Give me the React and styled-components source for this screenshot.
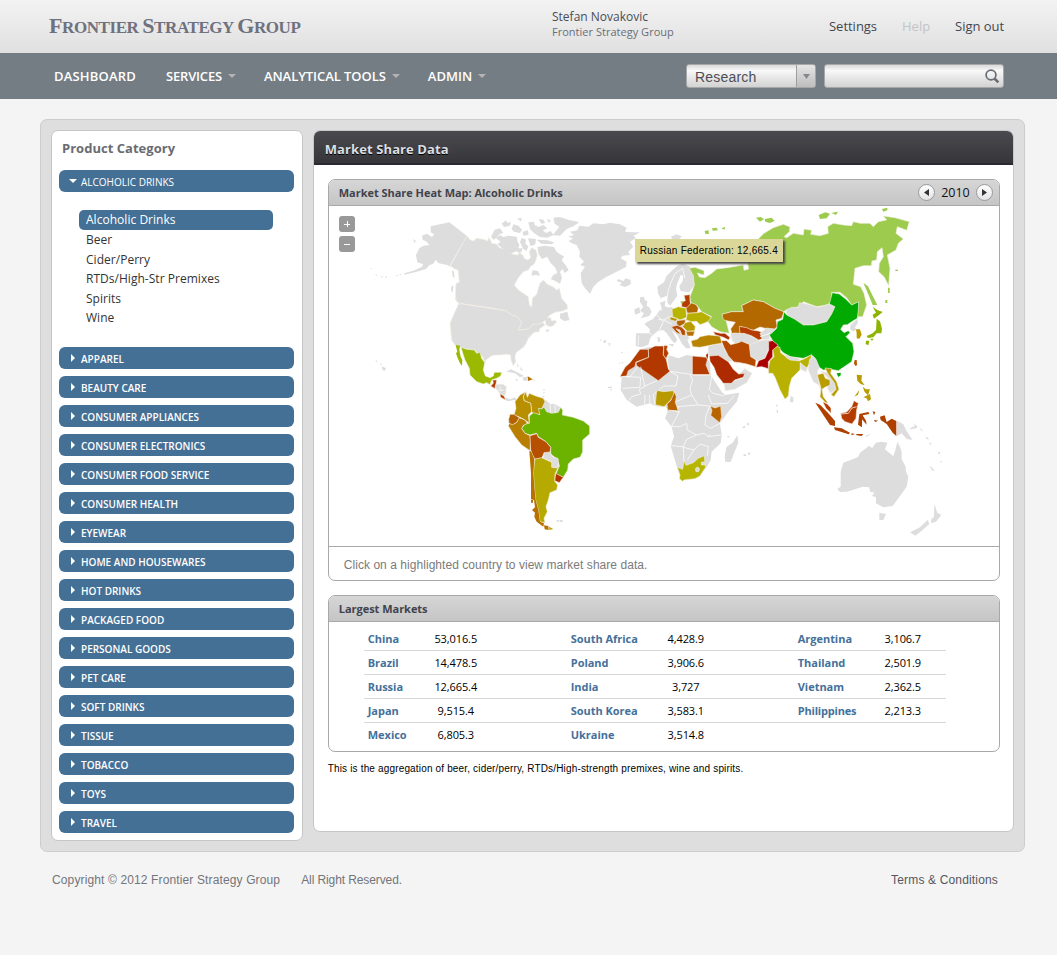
import React from "react";
import styled, { createGlobalStyle } from "styled-components";

const sans = '"Open Sans", "Noto Sans", sans-serif';
const helv = '"Liberation Sans", Arial, sans-serif';

const GlobalStyle = createGlobalStyle`
  * { box-sizing: border-box; }
  body { margin: 0; background: #f4f4f4; font-family: ${sans}; font-size: 12px; color: #333; }
  a { color: inherit; text-decoration: none; }
  ul { list-style: none; margin: 0; padding: 0; }
  h1, h2, h3, p { margin: 0; }
  svg { flex-shrink: 0; }
`;

const Page = styled.div`
  width: 1057px;
  height: 955px;
  overflow: hidden;
`;

const Header = styled.header`
  display: flex;
  height: 53px;
  padding-left: 49px;
  background: linear-gradient(#f3f3f3, #e0e0e0);
`;

const Logo = styled.h1`
  width: 503px;
  padding-top: 16px;
  font: bold 17px/24px "Liberation Serif", serif;
  text-transform: uppercase;
  letter-spacing: -0.42px;
  color: #6f717e;
  white-space: nowrap;
`;

const LogoCap = styled.span`
  font-size: 22px;
  line-height: 20px;
`;

const UserInfo = styled.div`
  width: 277px;
  padding-top: 9px;
  line-height: 15px;
  color: #4a4d55;
`;

const Company = styled.div`
  font-size: 11px;
  letter-spacing: 0.02px;
  color: #6a6e76;
`;

const HeaderLinks = styled.nav`
  display: flex;
  gap: 25px;
  padding-top: 17px;
  font-size: 13px;
  line-height: 18px;
  letter-spacing: -0.02px;
  color: #44464e;
`;

const HeaderLink = styled.a`
  color: ${(p) => (p.$muted ? "#c2c5c7" : "inherit")};
`;

const NavBar = styled.nav`
  display: flex;
  align-items: center;
  height: 46px;
  padding: 0 53px 0 54px;
  background: #757d84;
`;

const NavItem = styled.a`
  display: flex;
  align-items: center;
  gap: 6px;
  margin-right: ${(p) => p.$gap || 0}px;
  font-size: 13px;
  font-weight: 600;
  letter-spacing: ${(p) => p.$spacing || 0}px;
  color: #fff;
  white-space: nowrap;
`;

const SearchTools = styled.div`
  display: flex;
  gap: 8px;
  margin-left: auto;
`;

const SelectBox = styled.div`
  display: flex;
  width: 130px;
  height: 24px;
  border: 1px solid #a6a7a9;
  border-radius: 3px;
  background: linear-gradient(#d9d9d9, #f8f8f8 25%, #d2d2d2);
  font: 14px/24px ${helv};
  color: #4c4e56;
  overflow: hidden;
`;

const SelectText = styled.span`
  flex: 1;
  padding-left: 8px;
  letter-spacing: 0.2px;
`;

const SelectArrow = styled.span`
  display: flex;
  align-items: center;
  justify-content: center;
  width: 19px;
  border-left: 1px solid #9d9ea0;
  background: linear-gradient(#e5e5e5, #bdbdbd);
`;

const SearchField = styled.div`
  display: flex;
  align-items: center;
  justify-content: flex-end;
  width: 180px;
  height: 24px;
  padding-right: 3px;
  border: 1px solid #a6a7a9;
  border-radius: 3px;
  background: linear-gradient(#d9d9d9, #f8f8f8 25%, #d2d2d2);
`;

const Shell = styled.main`
  display: flex;
  align-items: flex-start;
  gap: 10px;
  width: 985px;
  height: 733px;
  margin: 20px 0 0 40px;
  padding: 10px;
  border: 1px solid #cdcdcd;
  border-radius: 7px;
  background: #dedede;
`;

const Sidebar = styled.aside`
  width: 252px;
  height: 711px;
  padding: 8px 8px 0 7px;
  border: 1px solid #c6c6c6;
  border-radius: 7px;
  background: #fff;
`;

const SidebarTitle = styled.h2`
  height: 31px;
  padding-left: 3px;
  font-size: 13px;
  line-height: 18px;
  color: #6a6c72;
  letter-spacing: 0.02px;
`;

const Category = styled.a`
  display: flex;
  align-items: center;
  height: 22px;
  margin-bottom: 7px;
  padding-left: 11px;
  gap: 6px;
  border-radius: 6px;
  background: #457096;
  color: #fff;
  font-size: 10px;
  font-weight: ${(p) => (p.$open ? 400 : 600)};
  line-height: 14px;
`;

const CategoryName = styled.span`
  padding-top: 2px;
`;

const MarkerSlot = styled.span`
  display: flex;
  justify-content: center;
  width: 5px;
`;

const SubList = styled.ul`
  margin: 18px 21px 19px 20px;
`;

const SubItem = styled.li`
  height: ${(p) => (p.$active ? 20 : 19.5)}px;
  padding-left: 7px;
  border-radius: 5px;
  line-height: 20px;
  letter-spacing: 0.03px;
  background: ${(p) => (p.$active ? "#457096" : "none")};
  color: ${(p) => (p.$active ? "#fff" : "#333")};
`;

const Content = styled.section`
  width: 702px;
  height: 702px;
  border: 1px solid #c6c6c6;
  border-radius: 7px;
  background: #fff;
  overflow: hidden;
`;

const ContentTitle = styled.h2`
  height: 34px;
  padding-left: 11px;
  background: linear-gradient(#49494f, #36363a);
  border-bottom: 2px solid #2a2832;
  font-size: 13px;
  line-height: 36px;
  letter-spacing: 0.1px;
  color: #dcdfe2;
  text-shadow: 0 1px 0 #000;
`;

const Panel = styled.section`
  width: 672px;
  margin: ${(p) => p.$top}px 0 0 14px;
  border: 1px solid #a8a8a8;
  border-radius: 7px;
  overflow: hidden;
`;

const PanelHead = styled.div`
  display: flex;
  align-items: center;
  height: 26px;
  padding: 0 6px 0 10px;
  border-bottom: 1px solid #a8a8a8;
  background: linear-gradient(#d6d6d6, #c5c5c5);
`;

const PanelTitle = styled.h3`
  flex: 1;
  font-size: 11px;
  line-height: 16px;
  padding-top: 1px;
  letter-spacing: -0.03px;
  color: #41434c;
`;

const YearPicker = styled.div`
  display: flex;
  align-items: center;
  gap: 6px;
  font-size: 12.5px;
  color: #111;
`;

const RoundButton = styled.button`
  display: flex;
  align-items: center;
  justify-content: center;
  width: 17px;
  height: 17px;
  padding: 0;
  border: 1px solid #9a9a9e;
  border-radius: 50%;
  background: linear-gradient(#fff, #e3e3e3);
`;

const MapArea = styled.div`
  position: relative;
  height: 340px;
  svg { display: block; }
`;

const ZoomControls = styled.div`
  position: absolute;
  left: 10px;
  top: 10px;
  display: grid;
  gap: 4px;
`;

const ZoomButton = styled.button`
  display: flex;
  align-items: center;
  justify-content: center;
  width: 16px;
  height: 16px;
  padding: 0;
  border: 0;
  border-radius: 3px;
  background: #999;
`;

const Tooltip = styled.div`
  position: absolute;
  left: 306px;
  top: 33px;
  width: 148px;
  height: 23px;
  padding-left: 5px;
  background: #dad798;
  box-shadow: 2px 2px 2px #444;
  font: 10px/24px ${helv};
  letter-spacing: 0.25px;
  color: #000;
  white-space: nowrap;
`;

const Hint = styled.p`
  height: 34px;
  padding-left: 15px;
  border-top: 1px solid #a8a8a8;
  font: 12px/37px ${helv};
  letter-spacing: 0.05px;
  color: #7b7b7b;
`;

const Markets = styled.div`
  width: 582px;
  margin: 5px 0 4px 35px;
`;

const MarketRow = styled.div`
  display: grid;
  grid-template-columns: 64px 139px 91px 136px 81px 71px;
  height: 24px;
  border-bottom: ${(p) => (p.$last ? "0" : "1px solid #d8d8d8")};
  font-size: 11px;
  line-height: 23px;
`;

const Country = styled.a`
  margin-right: -4px;
  padding-left: 4px;
  font-weight: 700;
  letter-spacing: ${(p) => (p.$long ? -0.2 : -0.03)}px;
  color: #44709a;
  white-space: nowrap;
`;

const Amount = styled.span`
  width: 56px;
  color: #000;
  letter-spacing: -0.1px;
  text-align: center;
`;

const Note = styled.p`
  margin: 9px 0 0 14px;
  font: 10px/16px ${helv};
  letter-spacing: 0.16px;
  color: #000;
`;

const Footer = styled.footer`
  display: flex;
  padding: 19px 59px 0 52px;
  font: 12px/18px ${helv};
  color: #73757a;
`;

const Copyright = styled.span`
  letter-spacing: 0.13px;
`;

const Rights = styled.span`
  margin-left: 21px;
  letter-spacing: -0.1px;
`;

const Terms = styled.a`
  margin-left: auto;
  letter-spacing: 0.16px;
  color: #55575e;
`;

const Land = styled.path`
  fill: ${(p) => p.$fill};
  stroke: ${(p) => (p.$border ? "#f3eee0" : "none")};
  stroke-width: 1.8;
  stroke-linejoin: round;
`;

const Triangle = ({ dir = "down", w = 7, h = 4, fill = "#fff" }) => {
  const d = {
    down: `0,0 ${w},0 ${w / 2},${h}`,
    right: `0,0 ${w},${h / 2} 0,${h}`,
    left: `${w},0 0,${h / 2} ${w},${h}`,
  }[dir];
  return (
    <svg width={w} height={h} viewBox={`0 0 ${w} ${h}`}>
      <polygon points={d} fill={fill} />
    </svg>
  );
};

const GRAY = "#dddddd";

/* Outlines are kept in tiles; each tile has its own origin on the map sheet, three units to a pixel. */
const tiles = [
  {
    x: 330, y: 205,
    lands: [
      [GRAY, "M411,93L360,180L368,188L352,180L340,178L325,174L318,165L308,178L298,180L288,192L255,202L222,209L223,205L250,197L275,186L280,178L262,172L258,150L268,130L280,122L298,120L290,110L278,104L276,92L290,86L306,96L312,88L302,82L302,64L358,52Z"],
      [GRAY, "M248,102L258,108L254,114ZM196,212L206,209L202,214ZM208,209L216,206L212,211ZM153,213L160,215L154,218ZM165,214L172,216L166,219ZM136,208L142,210L138,213ZM122,188L127,190L123,193ZM365,242L370,242L368,264L363,255ZM366,195L372,200L374,220L368,214ZM376,276L396,296L392,302L376,284ZM156,484L168,490L164,498L157,494ZM136,465L144,469L139,471ZM150,474L156,478L152,481Z"],
    ],
  },
  {
    x: 460, y: 205,
    lands: [
      [GRAY, "M21,93L30,104L40,108L50,100L70,103L84,108L85,98L90,102L95,115L110,118L118,128L135,132L146,142L160,148L172,150L180,144L190,152L192,160L204,165L212,158L208,140L215,128L228,135L232,150L228,165L222,178L212,184L205,195L190,200L175,218L163,240L175,255L190,265L205,275L208,300L215,306L217,280L230,268L235,250L240,235L250,225L262,238L280,246L290,255L298,250L305,280L322,300L322,312L308,318L285,322L270,330L262,338L272,338L275,348L285,346L290,350L280,362L270,365L258,360L256,346L248,352L235,358L220,358L205,372L175,376L185,350L172,335L155,330L138,317L100,310L0,295L-10,288L-14,270L-12,235L-2,232L-6,195L-20,190L-28,180Z", 1],
      [GRAY, "M7,297L138,317L155,330L172,335L185,350L175,376L205,372L220,358L235,358L248,352L255,360L238,372L238,380L222,382L205,400L200,412L192,425L168,443L165,455L167,470L160,482L153,465L152,450L140,448L120,450L108,450L95,452L78,465L75,475L68,455L60,448L55,450L45,435L20,432L8,430L-15,420L-25,405L-30,355L-15,320L-5,298Z", 1],
      [GRAY, "M358,62L385,65L400,55L430,58L450,53L480,58L500,68L495,80L515,82L540,82L520,92L528,100L510,110L520,125L505,140L510,150L488,152L482,160L500,170L498,186L470,200L440,215L415,230L400,245L390,266L375,250L365,235L362,205L375,185L360,180L372,170L358,155L360,140L350,120L335,115L326,108L340,100L324,95L342,90L330,80L352,76Z"],
      [GRAY, "M475,222L490,228L497,220L512,225L512,238L495,246L478,240L486,234L470,228Z"],
      [GRAY, "M108,100L120,90L130,96L145,92L170,95L172,108L178,120L172,138L150,146L130,132L112,118L122,110ZM93,95L104,74L120,70L130,84L118,88L108,100L100,104ZM125,56L138,46L142,54L152,50L150,62L132,66ZM160,58L175,62L186,74L180,84L162,80L155,72ZM188,80L204,76L206,90L190,92ZM172,40L186,40L182,50ZM205,52L222,50L224,60L236,66L250,60L262,70L248,76L258,84L272,78L280,90L262,98L240,96L222,84L210,72ZM236,42L250,44L256,54L244,56ZM260,42L272,46L268,54ZM280,38L300,36L325,44L358,52L340,64L320,72L300,92L278,90L288,78L298,66L284,56ZM185,98L198,104L196,116L205,124L200,138L190,132L180,112ZM204,100L228,102L226,118L212,124ZM230,104L262,106L282,112L276,118L244,116ZM232,126L255,122L282,126L290,140L300,148L312,154L305,166L318,182L326,196L314,204L308,192L300,200L306,218L300,236L286,228L272,222L280,210L292,204L286,188L270,172L262,155L246,162L236,148ZM170,130L188,130L184,142L174,144ZM218,196L234,198L240,212L226,210L214,212ZM300,326L322,320L328,346L312,348L300,340ZM256,374L270,374L262,382Z"],
      [GRAY, "M420,404h4v3h-4zM430,408h8v5h-8zM446,418h5v4h-5zM484,441h4v4h-4zM484,472h6v3h-6zM476,474h3v3h-3z"],
    ],
  },
  {
    x: 440, y: 340,
    lands: [
      ["#9bb900", "M47,15L60,17L58,30L62,50L67,60L66,77L60,70L52,52L48,40L52,35Z"],
      ["#9bb900", "M63,22L80,28L103,30L110,40L120,37L125,55L134,68L130,90L136,108L150,113L160,108L163,97L185,97L182,108L170,115L155,120L150,134L140,128L130,132L110,125L90,105L88,85L75,60L70,45Z", 1],
      ["#b43c00", "M158,120L170,120L168,132L165,146L152,138L160,130Z", 1],
      [GRAY, "M168,133L190,133L199,140L196,166L182,164L172,150L165,143Z", 1],
      ["#b43c00", "M180,161L192,168L197,180L182,172Z", 1],
      [GRAY, "M196,172L210,178L225,172L232,182L222,180L205,184L196,180Z"],
      [GRAY, "M198,95L212,88L235,98L252,108L240,112L225,100L205,96ZM248,112L262,110L262,122L250,122ZM226,117L236,119L230,123ZM280,118L287,120L280,122ZM232,68L236,80L232,82ZM240,80L250,92L242,90ZM310,148h4v4h-4zM310,156h4v4h-4zM308,168h5v4h-5zM350,540h8v5h-8zM360,540h8v6h-8z"],
      ["#b87000", "M263,109L278,118L264,123Z"],
      [GRAY, "M314,178L332,192L345,192L360,202L355,217L335,220L318,220L308,200Z"],
      ["#b89200", "M258,155L262,172L268,160L285,167L310,175L315,185L305,207L297,206L302,222L285,224L275,215L272,190L252,182L250,168Z", 1],
      ["#b88f00", "M257,155L250,168L252,182L272,190L275,215L265,225L268,250L255,240L240,232L222,225L228,205L225,185L240,165Z", 1],
      ["#6cb300", "M268,228L280,218L300,224L295,205L305,207L312,201L320,215L335,220L355,217L362,202L368,210L367,225L400,232L430,243L449,258L449,282L428,300L428,335L420,352L400,357L385,372L383,390L370,412L348,402L358,378L352,358L332,342L332,322L318,305L295,290L290,280L270,285L255,280L245,265L255,252L268,250Z", 1],
      ["#b87f00", "M237,233L255,240L262,250L250,256L245,266L255,280L270,287L272,300L270,332L245,315L225,290L205,258L208,250L218,253L230,247Z", 1],
      ["#b36200", "M210,223L222,223L238,233L230,247L218,254L207,250L206,238Z", 1],
      ["#b65000", "M270,287L290,281L295,292L318,305L332,322L330,340L312,340L305,355L285,358L278,345L272,330Z", 1],
      [GRAY, "M312,338L330,336L337,350L354,355L356,372L350,384L335,380L335,365L310,355Z", 1],
      ["#b23500", "M347,400L370,412L358,428L344,422Z", 1],
      ["#b6a900", "M285,357L305,353L335,367L335,382L350,384L358,376L345,402L344,424L353,435L350,450L330,458L325,480L318,500L322,515L312,535L315,548L300,545L295,510L287,480L283,440L280,400L283,370Z", 1],
      ["#b87000", "M268,334L273,334L283,357L280,400L283,440L287,480L295,510L300,545L312,550L310,560L290,545L283,530L285,518L276,510L285,502L282,480L273,478L273,400Z"],
      ["#b87000", "M312,556L325,558L326,570L314,568ZM273,480L279,480L279,488L273,488Z"],
      ["#b6a900", "M327,560L340,567L328,570Z"],
    ],
    borders: "M330,192L332,218M345,194L346,218M182,140L178,152L190,150",
  },
  {
    x: 600, y: 280,
    lands: [
      [GRAY, "M120,52L132,50L134,60L142,64L140,78L148,82L155,95L148,108L122,115L132,100L120,92L130,80L120,66ZM103,88L118,82L121,98L105,104Z"],
      [GRAY, "M180,68L196,62L194,78L202,82L215,82L240,95L258,122L250,150L268,175L262,180L272,205L258,205L245,190L232,165L215,150L232,180L224,190L216,182L200,160L190,150L175,152L165,160L152,172L145,194L125,202L107,198L108,160L148,160L150,148L133,132L145,124L158,118L170,104L178,92L186,88Z"],
      [GRAY, "M205,192L222,192L218,200ZM172,172L180,172L180,186L174,186ZM12,180h5v3h-5zM26,189h5v3h-5zM24,320h12v4h-12zM30,328h6v3h-6z"],
      ["#b8b500", "M216,88L235,80L258,85L260,112L240,120L218,110Z", 1],
      ["#b43c00", "M245,66L256,62L252,46L270,44L270,62L272,72L262,84L245,80Z", 1],
      ["#9dcb4d", "M242,64L252,64L248,70L242,69Z"],
      ["#b36200", "M258,85L275,68L288,72L295,85L292,98L262,100Z", 1],
      ["#b8b000", "M262,100L292,98L305,95L334,112L330,122L312,130L300,134L290,124L275,125L258,120Z", 1],
      ["#b89200", "M208,110L232,116L228,124L212,120Z", 1],
      ["#b36200", "M230,122L256,119L255,130L238,140L230,132Z", 1],
      ["#b89c00", "M255,128L272,124L286,140L284,152L262,154L248,140Z", 1],
      ["#b87000", "M258,154L284,154L280,168L262,168Z", 1],
      ["#b64a00", "M214,140L232,136L245,142L256,152L256,166L246,166L240,150L228,146L244,164L230,158Z", 1],
      [GRAY, "M324,200L345,192L366,192L372,205L384,226L398,244L385,244L355,228L325,228Z", 1],
      [GRAY, "M372,310L404,302L430,294L416,284L434,266L456,280L440,308L404,328L376,332Z", 1],
      ["#b88400", "M273,182L292,178L300,170L325,165L360,168L366,190L345,193L320,198L300,202L278,200Z", 1],
      ["#b03000", "M340,155L362,160L375,160L390,172L386,180L370,172L345,164Z", 1],
      [GRAY, "M392,162L410,158L440,162L480,182L476,196L450,200L425,186L405,192L396,180Z", 1],
      ["#b64a00", "M364,182L380,182L392,194L415,188L425,184L450,194L452,220L468,240L466,260L440,252L420,248L402,246L385,228L372,202Z", 1],
      ["#ae2a00", "M328,228L355,226L385,245L400,268L416,282L434,280L430,292L404,300L394,310L370,310L350,284L342,262L330,244Z", 1],
      ["#b43c00", "M318,224L324,220L324,240L319,246Z"],
      [GRAY, "M120,208L145,202L200,197L205,225L235,235L260,225L278,228L320,230L330,250L332,285L348,310L365,335L375,345L418,338L410,365L385,395L360,430L365,465L362,490L335,515L332,540L318,565L295,590L245,600L232,565L212,498L222,470L215,440L195,415L205,390L195,378L185,380L165,378L150,370L110,380L80,360L62,330L65,290L90,255Z"],
      ["#b43c00", "M120,208L145,208L146,232L108,246L105,260L85,272L80,288L60,290L75,262L90,248Z", 1],
      ["#b23800", "M145,208L165,198L191,198L190,225L198,236L206,268L210,274L175,302L110,257L108,248L146,232Z", 1],
      ["#b43c00", "M192,196L204,198L200,208L206,220L198,236L190,225Z", 1],
      ["#b43c00", "M277,228L300,230L320,232L322,240L318,255L330,284L277,284Z", 1],
      ["#b89a00", "M170,331L190,335L220,332L224,345L210,362L192,380L166,374Z", 1],
      ["#b86400", "M224,336L229,350L226,368L235,392L203,392L201,372L212,362Z", 1],
      ["#b86400", "M331,378L345,384L362,378L365,410L359,428L332,406L336,392Z", 1],
      ["#b6b600", "M232,562L248,568L252,542L258,556L280,548L295,535L313,527L315,558L319,558L300,588L285,596L252,600L248,604L238,596L240,585Z", 1],
      [GRAY, "M412,466L415,488L402,520L392,546L376,545L374,528L380,500L398,488ZM382,468h6v4h-6zM430,438h5v5h-5zM442,428h4v6h-4zM432,524h6v4h-6zM444,520h5v4h-5z"],
      [GRAY, "M286,566L292,561L299,566L296,575L288,575ZM304,546h9v9h-9z", 1],
    ],
    borders:
      "M66,290L90,290L112,262M80,290L122,292L120,322L68,325M122,260L134,320L118,328L122,342L95,350M134,318L172,302M205,225L202,240L206,268M210,274L278,284M210,274L234,288L228,318L190,318L175,333M270,284L278,300L270,325L275,345L228,365M275,345L295,375L232,380M278,285L330,285M335,290L328,330L340,340L372,348M325,345L335,372L382,370L402,348M295,375L330,378L318,405L315,435L332,445L360,430M215,440L240,440L260,430L262,450L290,465L312,460L325,470L330,462M212,497L250,500L260,478L290,465M250,500L252,545M250,502L282,510L300,492L325,500L322,528M282,510L262,540M325,470L362,465M205,390L238,395L225,420L215,438M165,378L160,345L172,333M135,345L134,375M148,345L150,370M95,350L85,365M232,388L235,380M190,120L216,132M170,104L190,125L178,150M116,166L114,196M148,160L156,164M175,118L190,120L215,108",
  },
  {
    x: 640, y: 205,
    lands: [
      [GRAY, "M52,245L72,232L80,212L98,195L112,182L130,176L150,185L160,205L163,240L148,262L122,258L118,244L128,228L130,212L122,210L112,235L108,250L112,272L98,292L90,302L82,292L80,272L62,280L54,265Z"],
      [GRAY, "M92,95L110,88L126,94L118,102L98,102Z"],
      ["#9dcb4d", "M160,212L148,190L165,187L192,197L192,210L172,204L178,216L195,218L215,205L230,192L262,188L310,180L312,196L326,192L322,170L345,150L350,120L355,102L372,85L400,68L430,58L450,66L448,80L432,95L440,98L460,85L490,90L492,72L515,76L512,88L540,92L565,85L563,65L580,55L610,60L635,62L640,50L660,55L690,55L700,65L715,50L740,45L730,33L765,38L808,50L800,76L772,65L768,85L790,102L775,115L768,135L742,150L750,190L746,242L732,215L716,200L718,175L730,155L726,128L712,140L710,165L696,168L694,182L670,182L645,190L640,238L662,245L672,265L680,300L668,335L652,335L655,292L635,300L620,278L600,262L575,262L577,290L560,300L530,305L490,290L480,304L440,315L430,320L405,310L370,290L340,285L305,302L310,320L275,320L246,328L258,345L268,385L240,380L215,365L204,350L215,335L185,320L170,300L152,292L150,275L155,262L163,240Z", 1],
      ["#9dcb4d", "M670,233L684,244L698,272L712,300L698,300L688,275ZM194,78L206,76L206,88L196,86ZM216,70L230,68L234,76L218,77ZM244,70L255,66L254,74ZM348,38L362,36L372,42L360,50ZM374,42L395,38L404,48L390,54L376,50ZM536,30L556,22L570,26L560,40L540,42ZM574,24L594,20L588,30ZM726,12L742,8L742,16L730,20ZM744,248h5v16h-5zM736,285h6v9h-6zM766,194h8v4h-8z"],
      ["#b36800", "M246,328L275,320L310,320L305,302L340,285L370,290L405,310L432,320L425,340L408,345L412,364L404,372L384,372L360,366L340,376L320,372L302,364L300,385L282,384L276,386L272,372L286,352L264,348L250,344Z", 1],
      ["#b43c00", "M298,364L320,368L335,375L356,378L376,386L370,400L356,405L334,392L312,385L300,385Z", 1],
    ],
    borders: "M80,290L84,260L92,235L105,205L128,190M128,190L135,220",
  },
  {
    x: 740, y: 290,
    lands: [
      [GRAY, "M138,60L155,52L175,52L178,38L200,42L235,52L268,42L285,52L275,72L260,95L220,105L190,105L165,88L140,75Z", 1],
      [GRAY, "M60,130L80,114L106,118L104,126L90,136L88,146L68,150Z", 1],
      [GRAY, "M28,165L60,152L96,148L86,175L75,205L52,212L32,200Z", 1],
      ["#00aa00", "M132,65L140,75L165,88L190,105L220,105L260,95L275,72L285,50L268,42L277,8L298,12L318,28L335,45L356,35L355,60L352,85L335,95L322,104L310,105L302,118L312,128L325,122L330,128L318,140L338,160L342,185L335,215L310,232L295,242L272,238L250,240L235,230L225,205L215,195L190,205L150,200L130,188L110,168L100,155L88,135L100,125L110,115L112,95L128,88Z", 1],
      ["#00aa00", "M290,250L302,248L302,256L295,261Z"],
      ["#b8b100", "M104,168L120,172L122,188L138,200L178,212L190,208L215,194L212,215L200,235L190,235L182,218L180,240L155,265L148,290L145,318L135,328L120,300L105,262L98,250L86,250L85,235L90,212L102,200L98,180Z", 1],
      ["#aa0000", "M86,154L98,152L115,166L98,180L98,200L85,215L85,236L65,230L48,232L56,212L75,205L86,180Z", 1],
      [GRAY, "M134,192L152,200L178,206L178,213L150,210L138,202ZM180,218L202,235L198,246L182,238ZM208,210L218,198L228,208L238,232L232,245L235,270L242,300L236,285L220,275L205,240ZM244,244L262,248L286,280L290,296L272,310L262,295L270,270Z", 1],
      ["#b89c00", "M232,254L250,250L256,265L270,270L270,285L255,292L246,298L250,320L264,338L256,338L240,320L243,295L236,270Z", 1],
      ["#b89c00", "M255,234L275,236L272,250L290,275L297,298L282,320L273,314L288,298L284,280L264,252Z", 1],
      ["#b43c00", "M248,335L262,342L273,354L273,370L258,355ZM302,370L320,366L335,350L342,332L355,340L350,360L348,385L336,402L315,395L305,385Z", 1],
      ["#ae4000", "M226,338L240,344L265,370L285,393L285,408L270,405L250,375ZM282,412L305,415L330,428L326,433L285,420ZM358,372L385,366L388,372L368,376L378,392L380,404L366,388L366,412L354,404ZM334,430L345,432L335,436ZM348,432L370,432L365,438L350,436ZM398,364L406,366L402,376ZM402,390L415,392L405,396ZM420,380L434,376L440,396L455,386L469,393L469,438L458,428L440,402L422,390Z"],
      [GRAY, "M471,392L490,403L500,424L518,450L500,447L485,430L471,438ZM375,438L395,430L380,440ZM510,414L532,406L530,414L512,418ZM520,398L530,408L526,410ZM538,412L548,422L544,424ZM548,430L560,440ZM556,438L568,448L560,448ZM568,456L576,462L570,464ZM568,528L574,530L584,542L578,542ZM595,486h5v6h-5zM600,514h6v3h-6zM108,344h5v5h-5zM110,360h4v8h-4zM22,400h5v6h-5zM8,412h5v3h-5zM10,492h6v4h-6zM24,488h7v4h-7zM152,318L160,322L160,337L150,337Z"],
      ["#b89c00", "M350,254L366,256L364,272L374,286L362,282L352,272ZM368,290L378,298L390,298L384,316L374,306ZM370,322L390,312L393,328L384,334L380,325ZM343,320L358,300L354,314Z"],
      ["#b85a00", "M344,210L350,210L351,226L346,228L342,220Z"],
      [GRAY, "M332,105L352,86L354,98L345,112L350,120L338,124L330,116Z"],
      ["#b89c00", "M348,118L360,118L365,134L358,146L350,145L350,130Z"],
      ["#8cb400", "M398,50L412,60L428,66L416,76L402,86L398,74L408,68ZM410,86L420,94L426,116L424,130L410,130L400,142L384,144L380,138L398,130L408,120ZM378,152L388,152L385,166L377,162ZM390,146L402,146L396,152Z"],
      [GRAY, "M302,545L310,518L338,508L355,500L360,488L388,467L396,475L408,458L424,455L442,458L435,478L460,499L466,480L472,455L480,470L485,485L485,508L497,530L498,545L505,560L500,590L480,618L458,648L430,652L408,640L408,622L396,618L404,608L390,605L388,592L368,590L345,598L320,605L300,606L292,597L302,590Z"],
      [GRAY, "M418,668L438,672L430,690L418,690ZM583,642L592,668L604,675L588,695L573,700L574,688L582,680ZM563,690L568,702L545,722L526,737L510,727L540,712Z"],
    ],
    borders: "M302,372L325,370L336,354L350,350M60,140L90,130",
  },
];

const WorldMap = () => (
  <svg width="670" height="340" viewBox="329 206 670 340">
    {tiles.map((t, i) => (
      <g key={i} transform={`translate(${t.x} ${t.y}) scale(0.33333)`}>
        {t.lands.map(([fill, d, border], j) => (
          <Land key={j} d={d} $fill={fill} $border={border} />
        ))}
        {t.borders && <path d={t.borders} fill="none" stroke="#fff" strokeWidth="2.2" />}
      </g>
    ))}
  </svg>
);

const subItems = ["Alcoholic Drinks", "Beer", "Cider/Perry", "RTDs/High-Str Premixes", "Spirits", "Wine"];

const categories = [
  "APPAREL", "BEAUTY CARE", "CONSUMER APPLIANCES", "CONSUMER ELECTRONICS", "CONSUMER FOOD SERVICE",
  "CONSUMER HEALTH", "EYEWEAR", "HOME AND HOUSEWARES", "HOT DRINKS", "PACKAGED FOOD", "PERSONAL GOODS",
  "PET CARE", "SOFT DRINKS", "TISSUE", "TOBACCO", "TOYS", "TRAVEL",
];

const markets = [
  ["China", "53,016.5", "South Africa", "4,428.9", "Argentina", "3,106.7"],
  ["Brazil", "14,478.5", "Poland", "3,906.6", "Thailand", "2,501.9"],
  ["Russia", "12,665.4", "India", "3,727", "Vietnam", "2,362.5"],
  ["Japan", "9,515.4", "South Korea", "3,583.1", "Philippines", "2,213.3"],
  ["Mexico", "6,805.3", "Ukraine", "3,514.8"],
];

export default function App() {
  return (
    <Page>
      <GlobalStyle />
      <Header>
        <Logo>
          <LogoCap>F</LogoCap>rontier <LogoCap>S</LogoCap>trategy <LogoCap>G</LogoCap>roup
        </Logo>
        <UserInfo>
          <div>Stefan Novakovic</div>
          <Company>Frontier Strategy Group</Company>
        </UserInfo>
        <HeaderLinks>
          <HeaderLink>Settings</HeaderLink>
          <HeaderLink $muted>Help</HeaderLink>
          <HeaderLink>Sign out</HeaderLink>
        </HeaderLinks>
      </Header>
      <NavBar>
        <NavItem $gap={30} $spacing={0.2}>DASHBOARD</NavItem>
        <NavItem $gap={28} $spacing={-0.2}>SERVICES <Triangle w={8} h={4} fill="#b4b4b4" /></NavItem>
        <NavItem $gap={28} $spacing={-0.05}>ANALYTICAL TOOLS <Triangle w={8} h={4} fill="#b4b4b4" /></NavItem>
        <NavItem>ADMIN <Triangle w={8} h={4} fill="#b4b4b4" /></NavItem>
        <SearchTools>
          <SelectBox>
            <SelectText>Research</SelectText>
            <SelectArrow><Triangle w={7} h={5} fill="#85878c" /></SelectArrow>
          </SelectBox>
          <SearchField>
            <svg width="16" height="16" viewBox="0 0 16 16" fill="none" stroke="#686c76">
              <circle cx="7" cy="7" r="4.9" strokeWidth="1.7" />
              <path d="M10.5 10.5L14.3 14.3" strokeWidth="2.6" />
            </svg>
          </SearchField>
        </SearchTools>
      </NavBar>
      <Shell>
        <Sidebar>
          <SidebarTitle>Product Category</SidebarTitle>
          <Category $open>
            <MarkerSlot><Triangle w={8} h={4} /></MarkerSlot>
            <CategoryName>ALCOHOLIC DRINKS</CategoryName>
          </Category>
          <SubList>
            {subItems.map((s, i) => <SubItem key={s} $active={i === 0}>{s}</SubItem>)}
          </SubList>
          {categories.map((c) => (
            <Category key={c}>
              <MarkerSlot><Triangle dir="right" w={4} h={8} /></MarkerSlot>
              <CategoryName>{c}</CategoryName>
            </Category>
          ))}
        </Sidebar>
        <Content>
          <ContentTitle>Market Share Data</ContentTitle>
          <Panel $top={14}>
            <PanelHead>
              <PanelTitle>Market Share Heat Map: Alcoholic Drinks</PanelTitle>
              <YearPicker>
                <RoundButton><Triangle dir="left" w={5} h={7} fill="#33343a" /></RoundButton>
                2010
                <RoundButton><Triangle dir="right" w={5} h={7} fill="#33343a" /></RoundButton>
              </YearPicker>
            </PanelHead>
            <MapArea>
              <WorldMap />
              <ZoomControls>
                <ZoomButton>
                  <svg width="8" height="8" viewBox="0 0 8 8" stroke="#fff"><path d="M1 4.5H7M4.5 1V7" /></svg>
                </ZoomButton>
                <ZoomButton>
                  <svg width="8" height="8" viewBox="0 0 8 8" stroke="#fff"><path d="M1 4.5H7" /></svg>
                </ZoomButton>
              </ZoomControls>
              <Tooltip>Russian Federation: 12,665.4</Tooltip>
            </MapArea>
            <Hint>Click on a highlighted country to view market share data.</Hint>
          </Panel>
          <Panel $top={14}>
            <PanelHead><PanelTitle>Largest Markets</PanelTitle></PanelHead>
            <Markets>
              {markets.map((row, i) => (
                <MarketRow key={i} $last={i === 4}>
                  {row.map((v, j) =>
                    j % 2 ? <Amount key={j}>{v}</Amount> : <Country key={j} $long={v.length > 10 && j === 4}>{v}</Country>
                  )}
                </MarketRow>
              ))}
            </Markets>
          </Panel>
          <Note>This is the aggregation of beer, cider/perry, RTDs/High-strength premixes, wine and spirits.</Note>
        </Content>
      </Shell>
      <Footer>
        <Copyright>Copyright © 2012 Frontier Strategy Group</Copyright>
        <Rights>All Right Reserved.</Rights>
        <Terms>Terms &amp; Conditions</Terms>
      </Footer>
    </Page>
  );
}
